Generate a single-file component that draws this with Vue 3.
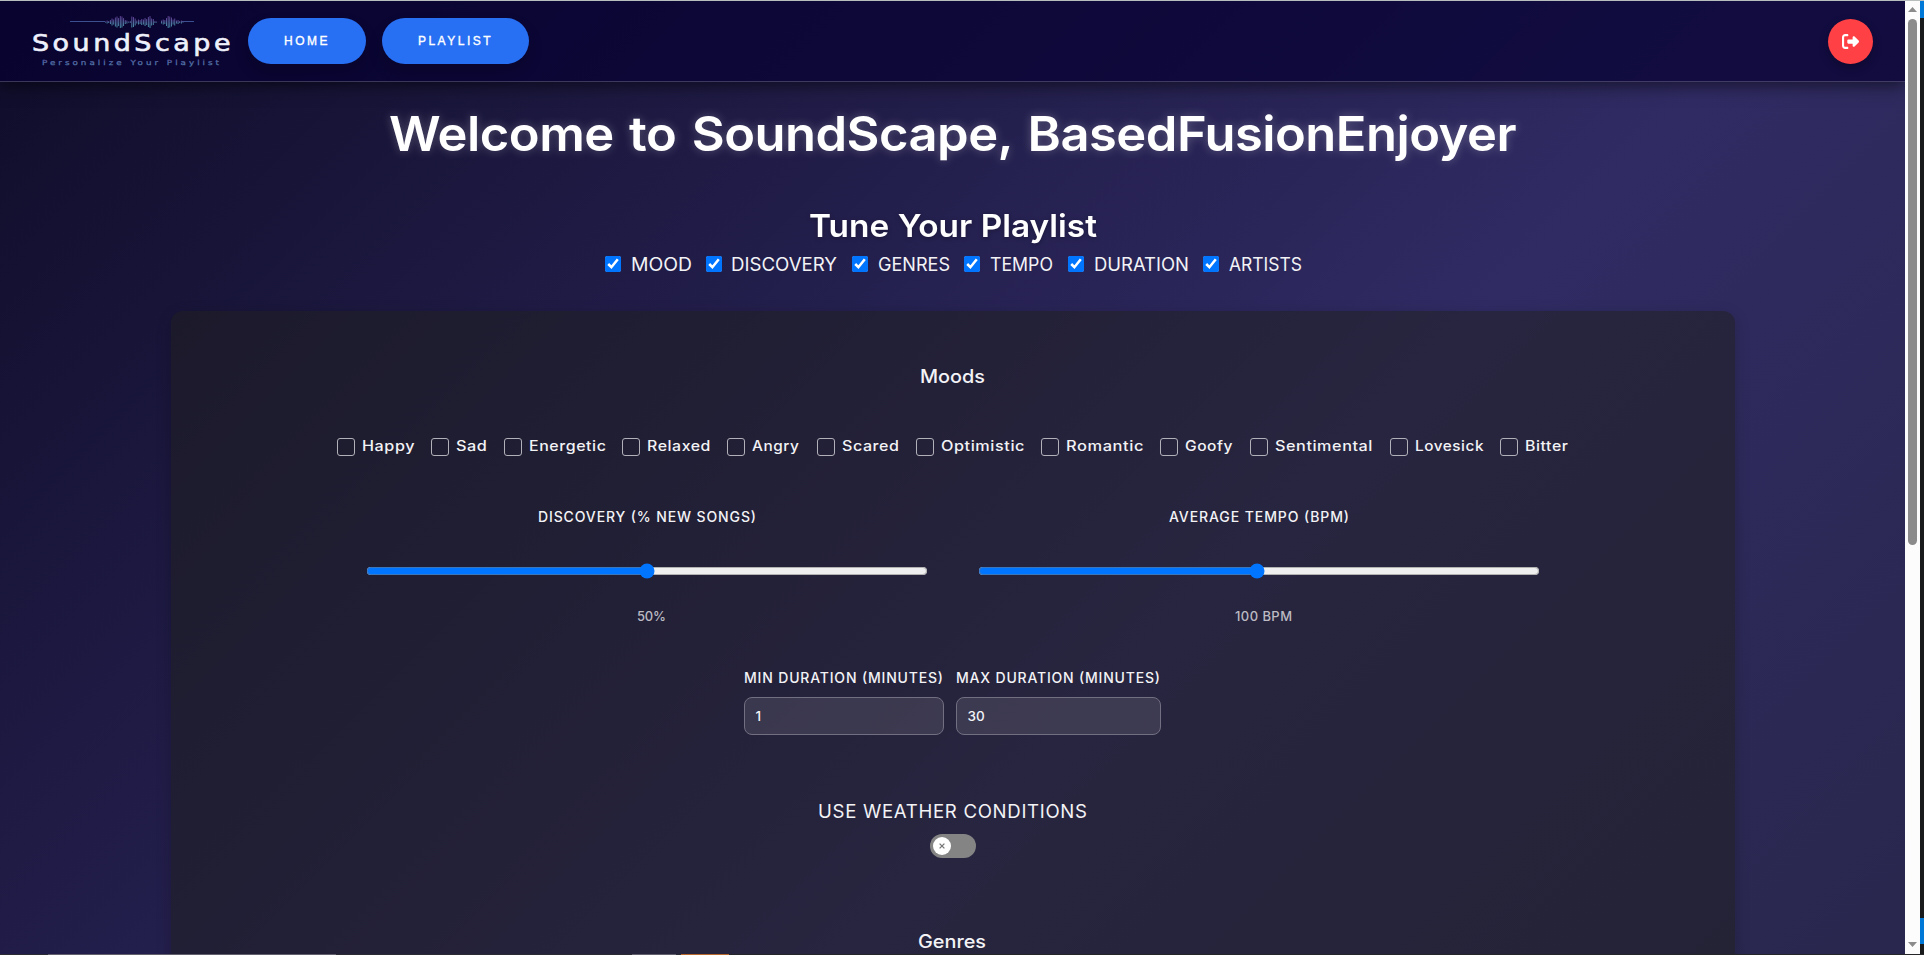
<script setup>
import { h, ref } from 'vue'

// One line of text set to a known width; vertically centred in its box.
const FitText = (props) =>
  h('svg', { width: props.w, height: props.lh }, [
    h('text', {
      x: 0,
      y: '50%',
      dy: '.364em',
      textLength: props.w,
      lengthAdjust: props.stretch ? 'spacingAndGlyphs' : 'spacing',
      fill: 'currentColor'
    }, props.text)
  ])
FitText.props = ['text', 'w', 'lh', 'stretch']

const sections = ref([
  { name: 'MOOD', w: 61, pitch: 100.6 },
  { name: 'DISCOVERY', w: 106, pitch: 146.3 },
  { name: 'GENRES', w: 72, pitch: 112 },
  { name: 'TEMPO', w: 63, pitch: 104 },
  { name: 'DURATION', w: 95, pitch: 135 },
  { name: 'ARTISTS', w: 73, pitch: 99 }
])

const moods = ref([
  { name: 'Happy', w: 53, pitch: 93.9 },
  { name: 'Sad', w: 31.5, pitch: 73.1 },
  { name: 'Energetic', w: 77.5, pitch: 117.9 },
  { name: 'Relaxed', w: 64, pitch: 104.9 },
  { name: 'Angry', w: 47.5, pitch: 90.2 },
  { name: 'Scared', w: 57.5, pitch: 98.8 },
  { name: 'Optimistic', w: 84, pitch: 124.9 },
  { name: 'Romantic', w: 78, pitch: 119.2 },
  { name: 'Goofy', w: 48, pitch: 89.8 },
  { name: 'Sentimental', w: 98, pitch: 140 },
  { name: 'Lovesick', w: 69, pitch: 109.4 },
  { name: 'Bitter', w: 43.5, pitch: 69 }
])

const bars = [1, 3, 2, 4, 7, 5, 9, 11, 8, 12, 11, 8, 4, 3, 1, 2, 11, 10, 7, 3, 5, 4, 6, 5, 8, 6, 10, 12, 7, 6, 2, 1, 0, 0, 3, 5, 4, 8, 12, 11, 9, 5, 7, 3, 4, 2, 3, 1]

const discovery = ref(50)
const tempo = ref(100)
</script>

<template>
  <div class="window">
    <div class="viewport">
      <div class="page">
        <header class="navbar">
          <svg class="logo" width="214" height="60" viewBox="0 0 214 60">
            <defs>
              <linearGradient id="tag" x1="0" y1="0" x2="0" y2="1">
                <stop offset="0" stop-color="#65419a" />
                <stop offset="1" stop-color="#4f9db2" />
              </linearGradient>
            </defs>
            <path d="M45 10.5H80M157 10.5H169" stroke="#3c4f8e" stroke-width="1" />
            <rect v-for="(b, i) in bars" :key="i" :x="80 + i * 1.65" :y="11 - b / 2" width="0.9" :height="b" fill="url(#tag)" />
            <text class="brand" x="7" y="40" textLength="202" lengthAdjust="spacingAndGlyphs">SoundScape</text>
            <text class="tagline" x="17" y="54" textLength="180" lengthAdjust="spacingAndGlyphs" fill="url(#tag)">Personalize Your Playlist</text>
          </svg>
          <nav class="links">
            <button class="pill home">HOME</button>
            <button class="pill list">PLAYLIST</button>
          </nav>
          <button class="logout" aria-label="Log out">
            <svg width="17" height="17" viewBox="0 0 512 512" fill="#fff">
              <path d="M377.9 105.9L500.7 228.7c7.2 7.2 11.3 17.1 11.3 27.3s-4.1 20.1-11.3 27.3L377.9 406.1c-6.4 6.4-15 9.9-24 9.9c-18.7 0-33.9-15.2-33.9-33.9l0-62.1-128 0c-17.7 0-32-14.3-32-32l0-64c0-17.7 14.3-32 32-32l128 0 0-62.1c0-18.7 15.2-33.9 33.9-33.9c9 0 17.6 3.6 24 9.9zM160 96L96 96c-17.7 0-32 14.3-32 32l0 256c0 17.7 14.3 32 32 32l64 0c17.7 0 32 14.3 32 32s-14.3 32-32 32l-64 0c-53 0-96-43-96-96L0 128C0 75 43 32 96 32l64 0c17.7 0 32 14.3 32 32s-14.3 32-32 32z" />
            </svg>
          </button>
        </header>

        <h1 class="title"><FitText text="Welcome to SoundScape, BasedFusionEnjoyer" :w="1127" :lh="58" stretch="1" /></h1>
        <h2 class="subtitle"><FitText text="Tune Your Playlist" :w="288" :lh="40" stretch="1" /></h2>

        <div class="sections">
          <label v-for="s in sections" :key="s.name" class="section" :style="{ width: s.pitch + 'px' }">
            <input type="checkbox" checked />
            <FitText :text="s.name" :w="s.w" :lh="24" stretch="1" />
          </label>
        </div>

        <main class="card">
          <h3 class="heading"><FitText text="Moods" :w="65" :lh="24" stretch="1" /></h3>
          <div class="moods">
            <label v-for="m in moods" :key="m.name" class="mood" :style="{ width: m.pitch + 'px' }">
              <span class="box"></span>
              <FitText class="mood-name" :text="m.name" :w="m.w" :lh="18" stretch="1" />
            </label>
          </div>

          <div class="sliders">
            <div class="slider">
              <FitText class="label" text="DISCOVERY (% NEW SONGS)" :w="218" :lh="18" />
              <input v-model="discovery" type="range" min="0" max="100" />
              <FitText class="value" text="50%" :w="29" :lh="16" />
            </div>
            <div class="slider">
              <FitText class="label" text="AVERAGE TEMPO (BPM)" :w="180" :lh="18" />
              <input v-model="tempo" type="range" min="1" max="200" />
              <FitText class="value" text="100 BPM" :w="57" :lh="16" />
            </div>
          </div>

          <div class="durations">
            <div class="duration min">
              <FitText class="label" text="MIN DURATION (MINUTES)" :w="199" :lh="18" />
              <div class="field">1</div>
            </div>
            <div class="duration max">
              <FitText class="label" text="MAX DURATION (MINUTES)" :w="204" :lh="18" />
              <div class="field">30</div>
            </div>
          </div>

          <FitText class="weather" text="USE WEATHER CONDITIONS" :w="269" :lh="24" />
          <div class="toggle">
            <span class="knob">
              <svg width="6" height="6" viewBox="0 0 6 6"><path d="M.6.6l4.8 4.8M5.4.6L.6 5.4" stroke="#777" stroke-width="1.3" /></svg>
            </span>
          </div>
          <h3 class="genres"><FitText text="Genres" :w="68" :lh="24" stretch="1" /></h3>
        </main>
      </div>
    </div>

    <div class="scrollbar">
      <svg width="9" height="5" viewBox="0 0 9 5"><path d="M0 5L4.5 0L9 5z" fill="#8b8b8b" /></svg>
      <div class="thumb"></div>
      <svg class="down" width="9" height="5" viewBox="0 0 9 5"><path d="M0 0L4.5 5L9 0z" fill="#8b8b8b" /></svg>
    </div>
    <div class="edge"></div>
    <div class="bottom-line"></div>
  </div>
</template>

<style>
body {
  overflow: hidden;
  background: #181a1b;
}
</style>

<style scoped>
.window {
  position: relative;
  display: flex;
  box-sizing: border-box;
  width: 1924px;
  height: 955px;
  border-top: 1px solid #b8bdbd;
  overflow: hidden;
  font-family: Inter, "Liberation Sans", sans-serif;
  color: #f3f3f6;
}
.window svg {
  display: block;
  flex: none;
  overflow: visible;
}
.viewport {
  width: 1905px;
  height: 954px;
  overflow: hidden;
}
.page {
  display: flex;
  flex-direction: column;
  align-items: center;
  height: 1677px;
  background: linear-gradient(135deg, #0f0c29, #302b63, #24243e);
}
.navbar {
  display: flex;
  align-items: center;
  box-sizing: border-box;
  width: 1905px;
  height: 81px;
  padding: 0 32px 0 25px;
  border-bottom: 1px solid rgba(255, 255, 255, 0.2);
  background: rgba(5, 0, 50, 0.7);
  box-shadow: 0 4px 15px rgba(0, 0, 0, 0.5);
}
.brand {
  font-family: "DejaVu Sans", sans-serif;
  font-size: 23px;
  letter-spacing: 3px;
  fill: #eef0fb;
  stroke: #eef0fb;
  stroke-width: 0.6;
}
.tagline {
  font-family: "DejaVu Sans", sans-serif;
  font-size: 7px;
  letter-spacing: 2.4px;
  stroke: #4f6fa8;
  stroke-width: 0.25;
}
.links {
  display: flex;
  flex: 1;
  gap: 16px;
  padding-left: 9px;
}
.pill {
  height: 46px;
  padding: 0;
  border: 0;
  border-radius: 23px;
  background: #2870f3;
  box-shadow: 0 8px 15px rgba(0, 0, 0, 0.15);
  color: #fff;
  font: 500 12px "Liberation Sans", Arial, sans-serif;
  letter-spacing: 2.5px;
  -webkit-text-stroke: 0.35px #fff;
}
.home {
  width: 118px;
}
.list {
  width: 147px;
}
.logout {
  display: flex;
  align-items: center;
  justify-content: center;
  width: 45px;
  height: 45px;
  padding: 0;
  border: 0;
  border-radius: 50%;
  background: #ff4145;
  box-shadow: 0 4px 10px rgba(0, 0, 0, 0.25);
}
.title {
  margin: 22.5px 0 0;
  font-size: 48px;
  font-weight: 600;
  letter-spacing: -0.5px;
  word-spacing: 3px;
  color: #fff;
  filter: drop-shadow(0 0 5px rgba(255, 255, 255, 0.25));
}
.subtitle {
  margin: 43.5px 0 0;
  font-size: 31.5px;
  font-weight: 600;
  color: #fff;
  filter: drop-shadow(0 1px 2px rgba(0, 0, 0, 0.3));
}
.sections {
  display: flex;
  margin: 6px 0 0 2.5px;
  font-size: 18.4px;
}
.section {
  display: flex;
  align-items: center;
  gap: 9.5px;
}
.section input {
  flex: none;
  width: 16px;
  height: 16px;
  margin: 0;
}
.card {
  display: flex;
  flex-direction: column;
  align-items: center;
  box-sizing: border-box;
  width: 1564px;
  height: 1300px;
  margin: 35px 0 0 1px;
  padding: 53px 2px 0 0;
  border-radius: 12px;
  background: rgba(31, 31, 30, 0.51);
  box-shadow: 0 4px 15px rgba(0, 0, 0, 0.2);
}
.heading,
.genres {
  margin: 0;
  font-size: 18.4px;
  font-weight: 500;
}
.moods {
  display: flex;
  margin: 50px 0 0 2px;
  font-size: 14px;
  font-weight: 500;
  letter-spacing: 0.5px;
}
.mood {
  display: flex;
  align-items: center;
  gap: 7px;
}
.mood-name {
  margin-top: -2px;
}
.box {
  flex: none;
  box-sizing: border-box;
  width: 18px;
  height: 18px;
  border: 1.5px solid #b2b1ba;
  border-radius: 3px;
}
.sliders {
  display: flex;
  gap: 50px;
  margin: 52px 0 0 1px;
}
.slider {
  display: flex;
  flex-direction: column;
  align-items: center;
  width: 562px;
}
.slider input {
  width: 562px;
  height: 16px;
  margin: 37px 0 29px;
}
.label {
  font-size: 14px;
  font-weight: 500;
}
.value {
  margin-left: 9px;
  font-size: 13px;
  font-weight: 500;
  color: #bcbbc3;
}
.durations {
  display: flex;
  gap: 12px;
  margin-top: 45px;
}
.field {
  display: flex;
  align-items: center;
  box-sizing: border-box;
  height: 38px;
  margin-top: 10px;
  padding-left: 11px;
  border: 1px solid #736f82;
  border-radius: 8px;
  background: rgba(255, 255, 255, 0.1);
  font-size: 13.5px;
  font-weight: 500;
}
.min {
  width: 200px;
}
.max {
  width: 205px;
}
.weather {
  margin-top: 64px;
  font-size: 18.6px;
}
.toggle {
  display: flex;
  align-items: center;
  box-sizing: border-box;
  width: 46px;
  height: 24px;
  margin: 11px 0 0 2px;
  padding-left: 3px;
  border-radius: 12px;
  background: #848484;
}
.knob {
  display: flex;
  align-items: center;
  justify-content: center;
  width: 18px;
  height: 18px;
  border-radius: 50%;
  background: #fff;
}
.genres {
  margin-top: 71px;
}
.scrollbar {
  display: flex;
  flex-direction: column;
  align-items: center;
  width: 15px;
  height: 954px;
  padding-top: 6px;
  box-sizing: border-box;
  background: #fcfcfc;
}
.thumb {
  width: 9px;
  height: 526px;
  margin-top: 7px;
  border-radius: 5px;
  background: #8b8b8b;
}
.down {
  margin-top: auto;
  margin-bottom: 8px;
}
.edge {
  width: 4px;
  height: 954px;
  background: linear-gradient(#0078d7 0 17px, #181a1b 17px 917px, #0078d7 917px 943px, #181a1b 943px);
}
.bottom-line {
  position: absolute;
  left: 0;
  bottom: 0;
  width: 1924px;
  height: 1px;
  background: linear-gradient(90deg, #2b2b33 0 48px, #62606c 48px 336px, #2b2b33 336px 632px, #62606c 632px 676px, #2b2b33 676px 681px, #b8672d 681px 729px, #25262a 729px);
}
</style>
